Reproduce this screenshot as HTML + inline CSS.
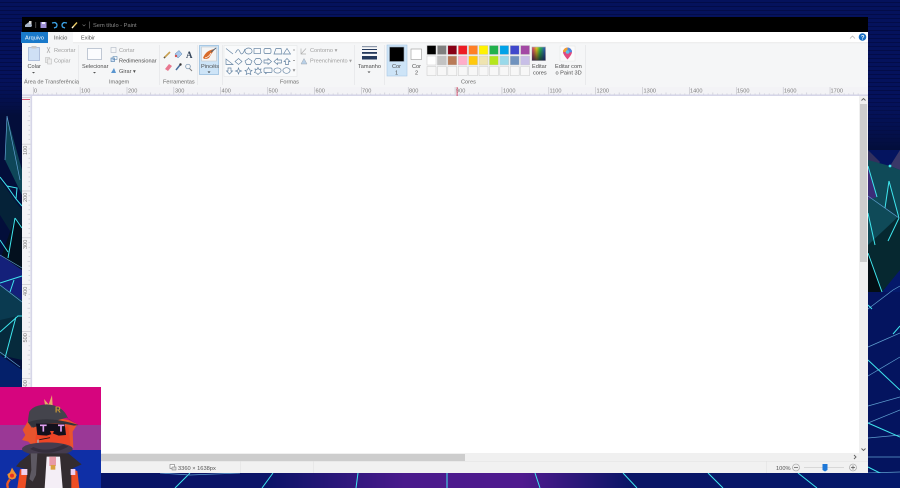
<!DOCTYPE html>
<html><head><meta charset="utf-8"><style>
html,body{margin:0;padding:0;background:#03105a;width:900px;height:488px;overflow:hidden}
svg{display:block;position:absolute;left:0;top:0;filter:blur(.3px)}
text{font-family:"Liberation Sans",sans-serif;font-size:5.6px;fill:#4e4e4e}
.g{fill:#a0a0a0}.lab{fill:#6a6a6a}.r{fill:#7c7c7c;font-size:5.6px}
.sh{fill:none;stroke:#5f7f9f;stroke-width:.65}
.cy{stroke:#3fe6ee;stroke-width:1;fill:none}
.lb{stroke:#5f9fd0;stroke-width:.7;fill:none}
</style></head><body>
<svg width="900" height="488" viewBox="0 0 900 488" xmlns="http://www.w3.org/2000/svg">
<defs>
<pattern id="scan" width="4" height="4" patternUnits="userSpaceOnUse"><rect width="4" height="4" fill="#05125c"/><rect y="2" width="4" height="1" fill="#030c48"/></pattern>
<pattern id="tx" x="33" y="87" width="46.87" height="9" patternUnits="userSpaceOnUse">
<rect x="0" y="0" width=".5" height="9" fill="#b4b4bc"/>
<g fill="#c0c0cc"><rect x="4.7" y="6.5" width=".6" height="1.6"/><rect x="9.4" y="6.5" width=".6" height="1.6"/><rect x="14.1" y="6.5" width=".6" height="1.6"/><rect x="18.7" y="6.5" width=".6" height="1.6"/><rect x="23.4" y="5.5" width=".6" height="2.6"/><rect x="28.1" y="6.5" width=".6" height="1.6"/><rect x="32.8" y="6.5" width=".6" height="1.6"/><rect x="37.5" y="6.5" width=".6" height="1.6"/><rect x="42.2" y="6.5" width=".6" height="1.6"/></g></pattern>
<pattern id="ty" x="22" y="97" width="10" height="46.87" patternUnits="userSpaceOnUse">
<rect x="0" y="0" width="10" height=".5" fill="#b4b4bc"/>
<g fill="#c0c0cc"><rect x="6.5" y="4.7" width="1.6" height=".6"/><rect x="6.5" y="9.4" width="1.6" height=".6"/><rect x="6.5" y="14.1" width="1.6" height=".6"/><rect x="6.5" y="18.7" width="1.6" height=".6"/><rect x="5.5" y="23.4" width="2.6" height=".6"/><rect x="6.5" y="28.1" width="1.6" height=".6"/><rect x="6.5" y="32.8" width="1.6" height=".6"/><rect x="6.5" y="37.5" width="1.6" height=".6"/><rect x="6.5" y="42.2" width="1.6" height=".6"/></g></pattern>
<linearGradient id="bot" x1="0" x2="1" y1="0" y2="0"><stop offset="0" stop-color="#041464"/><stop offset=".3" stop-color="#0c1468"/><stop offset=".45" stop-color="#4a1a8c"/><stop offset=".58" stop-color="#4f1a8e"/><stop offset=".7" stop-color="#0a1666"/><stop offset="1" stop-color="#04186a"/></linearGradient>
<linearGradient id="rain" x1="0" x2="1" y1="0" y2="0"><stop offset="0" stop-color="#e0307a"/><stop offset=".35" stop-color="#e8d020"/><stop offset=".6" stop-color="#30c050"/><stop offset="1" stop-color="#3050d0"/></linearGradient>
<linearGradient id="fade" x1="0" x2="0" y1="0" y2="1"><stop offset="0" stop-color="#000" stop-opacity="0"/><stop offset="1" stop-color="#101030" stop-opacity=".75"/></linearGradient>
<linearGradient id="dl" x1="0" x2="0" y1="0" y2="1"><stop offset="0" stop-color="#05125c" stop-opacity="0"/><stop offset="1" stop-color="#030e3a"/></linearGradient>
</defs>

<!-- wallpaper -->
<rect width="900" height="488" fill="#04145f"/>
<rect width="900" height="150" fill="url(#scan)"/>
<rect x="0" y="70" width="22" height="45" fill="url(#dl)"/>
<rect x="0" y="115" width="22" height="275" fill="#030e3a"/>
<rect x="868" y="90" width="32" height="60" fill="url(#dl)"/>
<!-- left -->
<polygon points="7,116 14,150 22,190 22,172" fill="#145a6c"/>
<polygon points="7,116 5,160 22,195 22,170" fill="#0e4658"/>
<polygon points="0,180 22,210 22,250 0,215" fill="#052238"/>
<polygon points="15,218 22,225 22,270 0,260" fill="#03101e"/>
<polygon points="0,255 22,270 22,310 0,310" fill="#14207a"/>
<polygon points="0,285 22,300 22,335 0,320" fill="#0a3a50"/>
<polygon points="0,320 22,315 22,360 0,355" fill="#062a3c"/>
<polygon points="0,355 22,370 22,388 0,388" fill="#04206a"/>
<path class="lb" d="M7,116 L5,160 M7,116 L20,180"/>
<path class="cy" d="M0,177 L7,186 L17,188 L16,199 L22,206 M7,186 L16,199"/>
<path class="cy" d="M15,218 L8,258 M15,218 L22,228"/>
<path class="cy" d="M0,240 L8,252"/>
<path class="lb" d="M0,255 L22,268"/>
<path class="cy" d="M0,283 L22,276 M14,280 L10,292"/>
<path class="lb" d="M0,285 L22,302"/>
<path class="cy" d="M0,332 L18,316 L22,316 M16,317 L5,358"/>
<path class="lb" d="M0,352 L20,367"/>
<!-- right -->
<polygon points="868,150 880,162 868,180" fill="#33305e"/>
<polygon points="890,166 900,150 900,170" fill="#3a3868"/>
<polygon points="868,160 890,166 900,170 900,250 868,250" fill="#0f4a58"/>
<polygon points="868,166 877,197 868,200" fill="#3c2c78"/>
<polygon points="889,181 885,208 899,218" fill="#0c3a48"/>
<polygon points="868,245 900,215 900,292 868,292" fill="#062830"/>
<polygon points="868,250 882,292 868,292" fill="#030e14"/>
<polygon points="868,292 882,292 900,270 900,292" fill="#04186a"/>
<path class="cy" d="M868,166 L877,197 M889,181 L885,208 M889,181 L899,218 M899,218 L888,241 M868,213 L875,245 M868,253 L882,292"/>
<path class="lb" d="M868,196 L899,218"/>
<circle cx="890" cy="166" r="1.4" fill="#3fe6ee"/>
<path class="lb" d="M868,309 L893,290 L900,286 M868,347 L900,333 M868,376 L900,357 M868,406 L900,397 M868,423 L900,410 M868,438 L900,435 M868,457 L900,457 M868,473 L900,472"/>
<path class="cy" d="M868,305 L872,309 M868,360 L900,390 M868,423 L900,437 M868,467 L900,483 M893,334 L900,326"/>
<!-- bottom -->
<rect x="0" y="473" width="900" height="15" fill="url(#bot)"/>
<path class="cy" d="M190,473 L175,488 M273,473 L262,488 M358,473 L356,488 M447,473 L447,488 M535,473 L540,488 M623,473 L637,488 M708,473 L723,488 M798,473 L817,488"/>
<path class="lb" d="M160,473 L190,475 L240,473"/>

<!-- window -->
<rect x="22" y="17" width="846" height="15" fill="#000"/>
<rect x="22" y="32" width="846" height="11" fill="#fff"/>
<rect x="22" y="43" width="846" height="44" fill="#f5f6f7"/>
<rect x="22" y="42.5" width="846" height=".6" fill="#dcdcdc"/>
<rect x="22" y="87" width="846" height="386" fill="#f0f0f0"/>

<!-- title bar icons -->
<path d="M25,27 L25,25 L29,22 L31,21 L32,26 L31,27Z" fill="#a8b4c8"/><rect x="29" y="21" width="2.5" height="3" fill="#d8d8d8"/>
<rect x="35.5" y="22" width=".6" height="6" fill="#777"/>
<rect x="40.5" y="22" width="6" height="6" fill="#9f90d8"/><rect x="42" y="22" width="3" height="2" fill="#e8e8f8"/>
<path d="M52,23 L55,22.5 Q58,24 56.5,27 L54,28" fill="none" stroke="#3da4e8" stroke-width="1.3"/>
<path d="M67,23 L64,22.5 Q61,24 62.5,27 L65,28" fill="none" stroke="#3da4e8" stroke-width="1.3"/>
<path d="M72,28 L77,22.5" stroke="#e8c860" stroke-width="1.4"/>
<path d="M72,28 L73.5,26.5" stroke="#fff" stroke-width="1"/>
<path d="M82.5,24.5 L84,26 L85.5,24.5" stroke="#777" stroke-width=".6" fill="none"/>
<rect x="89" y="21.5" width=".6" height="7" fill="#777"/>
<text x="93" y="27" style="font-size:5.7px;fill:#8a8a8a">Sem título - Paint</text>

<!-- tabs -->
<rect x="21" y="32" width="27" height="11" fill="#1979ca"/>
<text x="25" y="39.5" style="fill:#fff">Arquivo</text>
<rect x="48" y="32" width="25" height="11.5" fill="#f5f6f7"/>
<text x="54" y="39.5">Início</text>
<text x="81" y="39.5">Exibir</text>
<path d="M850,38.5 L852.5,36 L855,38.5" fill="none" stroke="#aaa" stroke-width=".7"/>
<circle cx="862.5" cy="37" r="3.8" fill="#1a6fc4"/>
<text x="860.9" y="39.3" style="fill:#fff;font-size:6px;font-weight:bold">?</text>

<!-- separators -->
<g fill="#e4e5e7"><rect x="78" y="45" width=".7" height="40"/><rect x="159" y="45" width=".7" height="40"/><rect x="197" y="45" width=".7" height="40"/><rect x="222" y="45" width=".7" height="40"/><rect x="354" y="45" width=".7" height="40"/><rect x="384" y="45" width=".7" height="40"/><rect x="585" y="45" width=".7" height="40"/></g>

<!-- clipboard -->
<rect x="28.5" y="47.5" width="11" height="13" fill="#cfe0f5" stroke="#9aaed0" stroke-width=".7"/>
<rect x="31.5" y="46" width="5" height="2.5" fill="#c8c8c8"/>
<text x="27.5" y="68">Colar</text>
<path d="M32,72 L33.5,73.5 L35,72Z" fill="#555"/>
<path d="M47,47 L50,53 M50,47 L47,53" stroke="#aaa" stroke-width=".7"/>
<text x="54" y="52" class="g">Recortar</text>
<rect x="45.5" y="57.5" width="4" height="5" fill="#e8e8e8" stroke="#b8b8b8" stroke-width=".5"/><rect x="47.5" y="59" width="4" height="5" fill="#eee" stroke="#b8b8b8" stroke-width=".5"/>
<text x="54" y="62.5" class="g">Copiar</text>
<text x="24" y="83.5" class="lab">Área de Transferência</text>

<!-- image -->
<rect x="87.5" y="48.5" width="14" height="11" fill="#fbfcfe" stroke="#a8b4c4" stroke-width=".7"/>
<text x="82" y="68">Selecionar</text>
<path d="M93,72 L94.5,73.5 L96,72Z" fill="#555"/>
<rect x="111" y="47.5" width="5" height="5" fill="none" stroke="#b0b8c4" stroke-width=".6"/>
<text x="119" y="52" class="g">Cortar</text>
<rect x="111" y="58" width="3.5" height="3.5" fill="#cfe0f5" stroke="#4a7aa8" stroke-width=".6"/><rect x="113" y="56.5" width="4" height="3" fill="none" stroke="#4a7aa8" stroke-width=".5"/>
<text x="119" y="62.5">Redimensionar</text>
<path d="M111,73 L114,68 L116,73Z" fill="#5a96d0"/>
<text x="119" y="72.8">Girar ▾</text>
<text x="109" y="83.5" class="lab">Imagem</text>

<!-- tools -->
<path d="M164,58 L170,52" stroke="#c8a050" stroke-width="1.6"/><path d="M164,58 L165,57" stroke="#555" stroke-width="1.4"/>
<path d="M175,54 L179,50.5 L182,54 L178,58Z" fill="#a8c8ec" stroke="#5a80a8" stroke-width=".5"/><circle cx="176" cy="56" r="1.2" fill="#d05050"/>
<text x="186" y="58" style="font-family:'Liberation Serif',serif;font-size:9px;font-weight:bold;fill:#33445a">A</text>
<path d="M165,69 L169,64 L172,66 L168,71Z" fill="#e87890"/>
<path d="M176,70 L180,65" stroke="#4a70a0" stroke-width="1.5"/><circle cx="180.5" cy="64.5" r="1.2" fill="#333"/>
<circle cx="188" cy="66.5" r="2.3" fill="none" stroke="#6a8aa8" stroke-width=".7"/><path d="M189.5,68.5 L192,71" stroke="#7a7a7a" stroke-width=".9"/>
<text x="163" y="83.5" class="lab">Ferramentas</text>

<!-- brush -->
<rect x="199.5" y="45.5" width="19" height="29" fill="#cde4f7" stroke="#8fb8dc" stroke-width=".7"/>
<rect x="201.5" y="47" width="15" height="14" fill="#f4f4f4" stroke="#c0c0c0" stroke-width=".5"/>
<path d="M203,58 Q206,50 215,49 Q211,54 209,58 Q205,60 203,58Z" fill="#d86a28"/>
<path d="M205,58 Q209,57 211,53" stroke="#fff" stroke-width=".8" fill="none"/>
<path d="M211,52 L216,48" stroke="#506478" stroke-width="1"/>
<text x="201" y="68">Pincéis</text>
<path d="M207.5,71.5 L209,73 L210.5,71.5Z" fill="#333"/>

<!-- shapes -->
<rect x="224" y="45.5" width="73" height="31" fill="#f9fafb" stroke="#e4e6e8" stroke-width=".6"/>
<g class="sh">
<path d="M226,48.5 L233,54"/>
<path d="M235.5,53 Q238,47 240,52 T245,49"/>
<ellipse cx="248.5" cy="51" rx="3.6" ry="3"/>
<rect x="254" y="48.5" width="6.5" height="5"/>
<rect x="264" y="48.5" width="7" height="5" rx="1.5"/>
<path d="M274,54 L276,48.5 L281,48.5 L282,54Z"/>
<path d="M283.5,54 L287,48.5 L290.5,54Z"/>
<path d="M226,59 L226,64.5 L233,64.5Z"/>
<path d="M238.5,58.5 L242,61.5 L238.5,64.5 L235,61.5Z"/>
<path d="M248.5,58.5 L252,61 L250.5,64.5 L246.5,64.5 L245,61Z"/>
<path d="M256,58.5 L260,58.5 L262,61.5 L260,64.5 L256,64.5 L254,61.5Z"/>
<path d="M264,60 L268,60 L268,58.5 L271.5,61.5 L268,64.5 L268,63 L264,63Z"/>
<path d="M281.5,60 L277.5,60 L277.5,58.5 L274,61.5 L277.5,64.5 L277.5,63 L281.5,63Z"/>
<path d="M287,58.5 L290,61.5 L288.5,61.5 L288.5,64.5 L285.5,64.5 L285.5,61.5 L284,61.5Z"/>
<path d="M229.5,74 L226.5,71 L228,71 L228,68 L231,68 L231,71 L232.5,71Z"/>
<path d="M238.5,68 L239.3,70.2 L241.5,71 L239.3,71.8 L238.5,74 L237.7,71.8 L235.5,71 L237.7,70.2Z"/>
<path d="M248.5,67.5 L249.6,70 L252,70.4 L250.2,72 L250.8,74.5 L248.5,73.2 L246.2,74.5 L246.8,72 L245,70.4 L247.4,70Z"/>
<path d="M258,67.5 L259,69.5 L261,69 L260.5,71 L261.5,72.5 L259.5,73 L258,74.5 L256.5,73 L254.5,72.5 L255.5,71 L255,69 L257,69.5Z"/>
<path d="M265,68 L271,68 Q272,68 272,69 L272,71.5 Q272,72.5 271,72.5 L267,72.5 L265.5,74 L266,72.5 L265,72.5 Q264,72.5 264,71.5 L264,69 Q264,68 265,68Z"/>
<ellipse cx="277.5" cy="70.5" rx="3.6" ry="2.6"/>
<ellipse cx="286.5" cy="70.5" rx="3.6" ry="2.8"/>
</g>
<path d="M293,50 L295,50 M293,60.5 L295,60.5" stroke="#888" stroke-width=".7"/>
<path d="M293,69 L294,71 L295,69" fill="none" stroke="#777" stroke-width=".7"/>
<path d="M301,54 L306,48.5 M301,48.5 L301,54 L306,54" fill="none" stroke="#b0b0b0" stroke-width=".7"/>
<text x="310" y="52" class="g">Contorno ▾</text>
<path d="M301,64 L304,58.5 L307,64Z" fill="#b8d0e8" stroke="#a0a8b0" stroke-width=".5"/>
<text x="310" y="62.5" class="g">Preenchimento ▾</text>
<text x="280" y="83.5" class="lab">Formas</text>

<!-- size -->
<rect x="362" y="46.5" width="15" height=".6" fill="#24395c"/>
<rect x="362" y="49" width="15" height="1" fill="#24395c"/>
<rect x="362" y="52" width="15" height="1.8" fill="#24395c"/>
<rect x="362" y="56" width="15" height="3.5" fill="#24395c"/>
<text x="358" y="68">Tamanho</text>
<path d="M367.5,71.5 L369,73 L370.5,71.5Z" fill="#444"/>

<!-- colours -->
<rect x="387" y="45" width="20" height="31" fill="#cde4f7" stroke="#a8c8e4" stroke-width=".6"/>
<rect x="389.5" y="47" width="14.5" height="14.5" fill="#000" stroke="#9ab" stroke-width=".6"/>
<text x="392" y="68">Cor</text><text x="395" y="74.5">1</text>
<rect x="411" y="49" width="10.5" height="10.5" fill="#fff" stroke="#999" stroke-width=".6"/>
<text x="412" y="68">Cor</text><text x="415" y="74.5">2</text>
<g stroke="#c8c8c8" stroke-width=".5">
<rect x="427" y="45.5" width="9" height="9" fill="#000"/><rect x="437.4" y="45.5" width="9" height="9" fill="#7f7f7f"/><rect x="447.8" y="45.5" width="9" height="9" fill="#880015"/><rect x="458.2" y="45.5" width="9" height="9" fill="#ed1c24"/><rect x="468.6" y="45.5" width="9" height="9" fill="#ff7f27"/><rect x="479" y="45.5" width="9" height="9" fill="#fff200"/><rect x="489.4" y="45.5" width="9" height="9" fill="#22b14c"/><rect x="499.8" y="45.5" width="9" height="9" fill="#00a2e8"/><rect x="510.2" y="45.5" width="9" height="9" fill="#3f48cc"/><rect x="520.6" y="45.5" width="9" height="9" fill="#a349a4"/>
<rect x="427" y="56" width="9" height="9" fill="#fff"/><rect x="437.4" y="56" width="9" height="9" fill="#c3c3c3"/><rect x="447.8" y="56" width="9" height="9" fill="#b97a57"/><rect x="458.2" y="56" width="9" height="9" fill="#ffaec9"/><rect x="468.6" y="56" width="9" height="9" fill="#ffc90e"/><rect x="479" y="56" width="9" height="9" fill="#efe4b0"/><rect x="489.4" y="56" width="9" height="9" fill="#b5e61d"/><rect x="499.8" y="56" width="9" height="9" fill="#99d9ea"/><rect x="510.2" y="56" width="9" height="9" fill="#7092be"/><rect x="520.6" y="56" width="9" height="9" fill="#c8bfe7"/>
<g fill="#f7f7f7"><rect x="427" y="66.5" width="9" height="9"/><rect x="437.4" y="66.5" width="9" height="9"/><rect x="447.8" y="66.5" width="9" height="9"/><rect x="458.2" y="66.5" width="9" height="9"/><rect x="468.6" y="66.5" width="9" height="9"/><rect x="479" y="66.5" width="9" height="9"/><rect x="489.4" y="66.5" width="9" height="9"/><rect x="499.8" y="66.5" width="9" height="9"/><rect x="510.2" y="66.5" width="9" height="9"/><rect x="520.6" y="66.5" width="9" height="9"/></g>
</g>
<rect x="532" y="47" width="13.5" height="13.5" fill="url(#rain)" stroke="#aaa" stroke-width=".6"/>
<rect x="532" y="47" width="13.5" height="13.5" fill="url(#fade)"/>
<text x="532" y="68">Editar</text><text x="533" y="74.5">cores</text>
<rect x="560" y="46" width="15" height="15" fill="#fbfbfb" stroke="#e4e4e4" stroke-width=".5"/>
<path d="M567.5,59.5 Q563,54.5 563,52 A4.5,4.5 0 0 1 572,52 Q572,54.5 567.5,59.5Z" fill="#e04a80"/>
<path d="M563,52 A4.5,4.5 0 0 1 567.5,47.5 L567.5,52Z" fill="#f0a030"/>
<path d="M567.5,47.5 A4.5,4.5 0 0 1 572,52 L567.5,53Z" fill="#4a8ae0"/>
<circle cx="567.5" cy="52" r="1.8" fill="#60c0e8"/>
<text x="555" y="68">Editar com</text><text x="555.5" y="74.5">o Paint 3D</text>
<text x="461" y="83.5" class="lab">Cores</text>

<!-- horizontal ruler -->
<rect x="22" y="87" width="846" height="9" fill="#f3f3f6"/>
<rect x="33" y="87" width="826" height="9" fill="url(#tx)"/>
<rect x="22" y="94.4" width="846" height="1.6" fill="#d6d6e8"/>
<text class="r" x="34" y="92.5">0</text><text class="r" x="81" y="92.5">100</text><text class="r" x="128" y="92.5">200</text><text class="r" x="175" y="92.5">300</text><text class="r" x="221.5" y="92.5">400</text><text class="r" x="268.5" y="92.5">500</text><text class="r" x="315.5" y="92.5">600</text><text class="r" x="362" y="92.5">700</text><text class="r" x="409" y="92.5">800</text><text class="r" x="456" y="92.5">900</text><text class="r" x="503" y="92.5">1000</text><text class="r" x="549.5" y="92.5">1100</text><text class="r" x="596.5" y="92.5">1200</text><text class="r" x="643.5" y="92.5">1300</text><text class="r" x="690" y="92.5">1400</text><text class="r" x="737" y="92.5">1500</text><text class="r" x="784" y="92.5">1600</text><text class="r" x="830.5" y="92.5">1700</text>
<rect x="456.7" y="87" width=".8" height="9" fill="#d03050"/>

<!-- vertical ruler -->
<rect x="22" y="96" width="11" height="377" fill="#f3f3f6"/>
<rect x="22" y="97" width="9" height="356" fill="url(#ty)"/>
<rect x="30.5" y="96" width="1.7" height="357" fill="#d6d6e8"/>
<rect x="22" y="99" width="8" height=".8" fill="#d03050"/>
<text class="r" transform="translate(27,155) rotate(-90)" x="0" y="0">100</text>
<text class="r" transform="translate(27,202) rotate(-90)" x="0" y="0">200</text>
<text class="r" transform="translate(27,249) rotate(-90)" x="0" y="0">300</text>
<text class="r" transform="translate(27,296) rotate(-90)" x="0" y="0">400</text>
<text class="r" transform="translate(27,342.5) rotate(-90)" x="0" y="0">500</text>
<text class="r" transform="translate(27,389.5) rotate(-90)" x="0" y="0">600</text>

<!-- canvas -->
<rect x="32.2" y="96" width="826.8" height="357" fill="#fff"/>

<!-- v scrollbar -->
<rect x="859" y="96" width="8.5" height="357" fill="#f0f0f0"/>
<rect x="860" y="104" width="7" height="158" fill="#cdcdcd"/>
<path d="M861.5,100.5 L863.5,98.5 L865.5,100.5" fill="none" stroke="#606060" stroke-width=".9"/>
<path d="M861.5,448.5 L863.5,450.5 L865.5,448.5" fill="none" stroke="#606060" stroke-width=".9"/>
<!-- h scrollbar -->
<rect x="33" y="453" width="826" height="8" fill="#f0f0f0"/>
<rect x="42" y="454" width="423" height="7" fill="#cdcdcd"/>
<path d="M854,455 L856,457 L854,459" fill="none" stroke="#606060" stroke-width=".9"/>
<!-- status -->
<rect x="22" y="461" width="846" height="12" fill="#f1f1f1"/>
<rect x="22" y="461" width="846" height=".6" fill="#e4e4e4"/>
<rect x="240" y="461" width=".6" height="12" fill="#e2e2e2"/><rect x="313" y="461" width=".6" height="12" fill="#e2e2e2"/><rect x="766" y="461" width=".6" height="12" fill="#e2e2e2"/>
<rect x="170" y="464.5" width="4.5" height="4" fill="#fff" stroke="#777" stroke-width=".6"/><rect x="172" y="467" width="4" height="3" fill="#ddd" stroke="#777" stroke-width=".5"/>
<text x="178" y="469.8" style="font-size:5.7px;fill:#555">3360 × 1638px</text>
<text x="776" y="469.8" style="font-size:5.7px;fill:#555">100%</text>
<circle cx="796" cy="467.5" r="3.5" fill="#eee" stroke="#9a9a9a" stroke-width=".6"/><rect x="794" y="467.2" width="4" height=".7" fill="#555"/>
<rect x="804" y="467" width="40" height="1" fill="#d8d8d8"/>
<path d="M822.5,464 L827.5,464 L827.5,470 L825,471.5 L822.5,470Z" fill="#1e78d8"/>
<circle cx="853" cy="467.5" r="3.5" fill="#eee" stroke="#9a9a9a" stroke-width=".6"/><path d="M851,467.5 L855,467.5 M853,465.5 L853,469.5" stroke="#555" stroke-width=".7"/>

<!-- avatar -->
<rect x="0" y="387" width="101" height="39" fill="#d6057e"/>
<rect x="0" y="425" width="101" height="26" fill="#9a3896"/>
<rect x="0" y="450" width="101" height="38" fill="#0f2fa6"/>
<g transform="translate(0,385) scale(.3333)">
<path d="M138,78 L132,42 L146,58 L156,30 L158,62 L150,82Z" fill="#e8a868"/>
<path d="M68,135 L88,102 L120,90 L205,105 L232,118 L218,140 L220,190 L205,175 L100,185 L85,170 L66,165 L76,150Z" fill="#e8542e"/>
<path d="M110,125 L205,125 L212,185 L104,190Z" fill="#ee4526"/>
<path d="M84,112 L95,128 L200,98 L236,120 L205,102 Q190,60 140,58 Q100,60 88,80 Q84,100 84,112Z" fill="#44444c"/>
<path d="M84,112 Q140,90 236,120 L222,122 Q150,105 100,128Z" fill="#34343c"/>
<text x="165" y="82" style="font-size:24px;font-weight:bold;fill:#c89838">R</text>
<path d="M108,116 L194,116 L198,150 L176,152 L160,146 L140,152 L112,150Z" fill="#14101c"/>
<path d="M120,121 L140,121 M130,121 L130,140 M174,121 L193,121 M183,121 L183,140" stroke="#e0a0f0" stroke-width="5" fill="none"/>
<path d="M150,138 L162,138 L156,152Z" fill="#ee4526"/>
<path d="M118,164 L150,158" stroke="#201010" stroke-width="2.5"/>
<path d="M114,164 L114,174" stroke="#88d8e8" stroke-width="3"/>
<ellipse cx="142" cy="192" rx="76" ry="20" fill="#453c4e"/>
<path d="M100,186 Q142,205 190,178 L205,185 Q145,218 90,192Z" fill="#352e3c"/>
<path d="M60,230 L92,205 L205,205 L245,238 L218,250 L214,309 L76,309 L76,252 L48,244Z" fill="#332c30"/>
<path d="M140,215 L180,215 L188,309 L134,309Z" fill="#f4eef6"/>
<rect x="148" y="215" width="20" height="28" fill="#e89aa8"/>
<rect x="152" y="240" width="14" height="14" fill="#d8a040"/>
<path d="M92,205 L112,205 L108,270 L98,290 L88,282 L94,255Z" fill="#5d5862"/>
<path d="M60,252 L82,258 L76,309 L52,309Z" fill="#ee4d24"/>
<path d="M214,252 L232,258 L238,309 L214,309Z" fill="#ee4d24"/>
<rect x="64" y="252" width="18" height="18" fill="#f0d0f0"/>
<rect x="212" y="252" width="14" height="18" fill="#f0d0f0"/>
<path d="M22,268 L30,262 L36,248 L42,258 L50,270 L46,280 L36,284 L26,280Z" fill="#f09030"/>
<path d="M30,284 Q18,295 24,309" stroke="#ee5a20" stroke-width="7" fill="none"/>
<circle cx="36" cy="272" r="6" fill="#e83020"/>
</g>
</svg>
</body></html>
